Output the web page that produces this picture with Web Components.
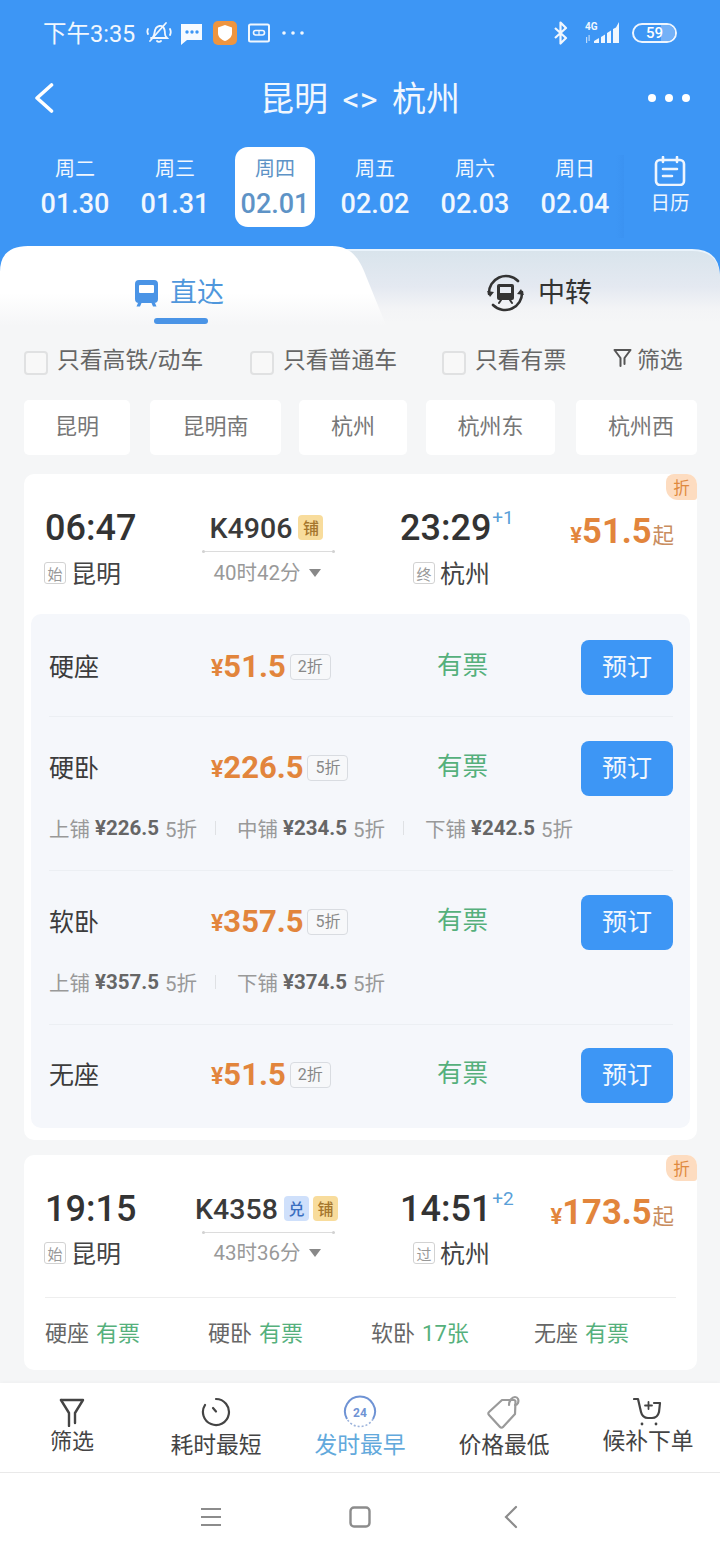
<!DOCTYPE html>
<html lang="zh-CN">
<head>
<meta charset="utf-8">
<title>昆明 &lt;&gt; 杭州</title>
<style>
  html, body { margin: 0; padding: 0; }
  body { width: 720px; height: 1560px; overflow: hidden; background: #f5f6f7; color: #333;
    font-family: Roboto, "Noto Sans CJK SC", sans-serif; }
  .list { flex: 1 1 0; min-height: 0; }
</style>
</head>
<body>
<ticket-app>
  <status-bar></status-bar>
  <top-nav title-text="昆明 <> 杭州"></top-nav>
  <date-strip>
    <date-item week="周二" day="01.30"></date-item>
    <date-item week="周三" day="01.31"></date-item>
    <date-item week="周四" day="02.01" selected></date-item>
    <date-item week="周五" day="02.02"></date-item>
    <date-item week="周六" day="02.03"></date-item>
    <date-item week="周日" day="02.04"></date-item>
  </date-strip>
  <trip-tabs></trip-tabs>
  <filter-row></filter-row>
  <station-chips></station-chips>

  <train-card dep="06:47" dep-tag="始" from="昆明" code="K4906" badges="铺" duration="40时42分"
    arr="23:29" plus="+1" arr-tag="终" to="杭州" price="51.5">
    <seat-panel>
      <seat-row name="硬座" price="51.5" off="2折"></seat-row>
      <seat-row name="硬卧" price="226.5" off="5折">
        <fare-item label="上铺" price="226.5" off="5折"></fare-item>
        <fare-item label="中铺" price="234.5" off="5折"></fare-item>
        <fare-item label="下铺" price="242.5" off="5折"></fare-item>
      </seat-row>
      <seat-row name="软卧" price="357.5" off="5折">
        <fare-item label="上铺" price="357.5" off="5折"></fare-item>
        <fare-item label="下铺" price="374.5" off="5折"></fare-item>
      </seat-row>
      <seat-row name="无座" price="51.5" off="2折"></seat-row>
    </seat-panel>
  </train-card>

  <train-card compact dep="19:15" dep-tag="始" from="昆明" code="K4358" badges="兑,铺" duration="43时36分"
    arr="14:51" plus="+2" arr-tag="过" to="杭州" price="173.5">
    <seat-summary>
      <summary-item name="硬座" state="有票"></summary-item>
      <summary-item name="硬卧" state="有票"></summary-item>
      <summary-item name="软卧" state="17张"></summary-item>
      <summary-item name="无座" state="有票"></summary-item>
    </seat-summary>
  </train-card>

  <div class="list"></div>

  <sort-bar>
    <sort-item icon="filter" label="筛选" high></sort-item>
    <sort-item icon="clock" label="耗时最短"></sort-item>
    <sort-item icon="early" label="发时最早" active></sort-item>
    <sort-item icon="tag" label="价格最低"></sort-item>
    <sort-item icon="cart" label="候补下单" high></sort-item>
  </sort-bar>
  <system-nav></system-nav>
</ticket-app>

<script>
  const BLUE = '#3d96f5';

  // Small base class, every element just fills its open shadow root once
  class ShadowElement extends HTMLElement {
    constructor() {
      super();
      this.attachShadow({ mode: 'open' });
    }
    connectedCallback() {
      this.shadowRoot.innerHTML = this.render();
    }
    attr(name) {
      return this.getAttribute(name) || '';
    }
  }

  class TicketApp extends ShadowElement {
    render() {
      return `
      <style>
        :host { display: flex; flex-direction: column; height: 1560px; }
        ::slotted(:not(.list)) { flex: none; }
      </style>
      <slot></slot>`;
    }
  }

  class StatusBar extends ShadowElement {
    render() {
      return `
      <style>
        :host { display: flex; align-items: center; height: 66px; background: ${BLUE}; color: #f1f7fe; box-sizing: border-box; padding: 0 43px 0 43px; }
        .time { font-size: 23.500px; width: 101px; white-space: nowrap; padding-bottom: 3px; }
        svg { display: block; flex: none; }
        .gap { flex: 1; }
      </style>
      <span class="time">下午3:35</span>
      <svg width="26" height="26" viewBox="0 0 26 26" fill="none" stroke="#f1f7fe" stroke-width="1.8" stroke-linecap="round" style="margin-left:2px">
        <path d="M7 17c2-2 1-6 3-9 2-2 5-3 7-1 2 2 2 5 2 7 0 2 1 3 2 4H5"/><path d="M11 21c1 1 3 1 4 0"/><path d="M20 3 4 21"/><path d="M24 9c1 2 1 4 0 6M2 9c-1 2-1 3 0 5"/>
      </svg>
      <svg width="24" height="24" viewBox="0 0 24 24" style="margin-left:7px">
        <path fill="#f6faff" d="M2 3h21v16H8l-6 5z"/><circle cx="8" cy="11" r="1.7" fill="${BLUE}"/><circle cx="13" cy="11" r="1.7" fill="${BLUE}"/><circle cx="18" cy="11" r="1.7" fill="${BLUE}"/>
      </svg>
      <svg width="24" height="24" viewBox="0 0 24 24" style="margin-left:10px">
        <rect width="24" height="24" rx="5" fill="#ee9540"/><path fill="#fff" d="M12 4l7 2.5V12c0 4-3 6.500-7 8-4-1.500-7-4-7-8V6.500z"/>
      </svg>
      <svg width="22" height="20" viewBox="0 0 22 20" fill="none" stroke="#f1f7fe" style="margin-left:11px">
        <rect x="1" y="1.500" width="20" height="17" rx="1.500" stroke-width="2"/><rect x="5.500" y="7.500" width="11" height="4.500" rx="2.200" stroke-width="1.600"/><path d="M11 7.500v4.500" stroke-width="1.200"/>
      </svg>
      <svg width="22" height="6" viewBox="0 0 22 6" fill="#f1f7fe" style="margin-left:12px">
        <circle cx="2" cy="3" r="1.800"/><circle cx="11" cy="3" r="1.800"/><circle cx="20" cy="3" r="1.800"/>
      </svg>
      <span class="gap"></span>
      <svg width="14" height="24" viewBox="0 0 14 24" fill="none" stroke="#f1f7fe" stroke-width="2.200" stroke-linejoin="round">
        <path d="M1 7l11 10-5.500 5.500V1.500L12 7 1 17"/>
      </svg>
      <signal-icon style="margin-left:17px"></signal-icon>
      <battery-pill level="59" style="margin-left:11px"></battery-pill>`;
    }
  }

  class SignalIcon extends ShadowElement {
    render() {
      return `
      <style>
        :host { display: block; position: relative; width: 36px; height: 24px; }
        svg { display: block; }
        span { position: absolute; left: 0; top: 0; font-size: 10px; line-height: 11px; font-weight: 700; color: #f1f7fe; }
      </style>
      <span>4G</span>
      <svg width="36" height="24" viewBox="0 0 36 24" fill="#f1f7fe">
        <rect x="1" y="16" width="1.200" height="6" opacity=".7"/><rect x="3.500" y="14" width="1.200" height="6" opacity=".7"/>
        <path d="M9 22v-2l5-3v5zM16 22v-6l4-2.500V22zM22 22V12l4-2.500V22zM28 22V8l3-1.500L34 1v21z"/>
      </svg>`;
    }
  }

  class BatteryPill extends ShadowElement {
    render() {
      return `
      <style>
        :host { display: flex; align-items: center; justify-content: center; box-sizing: border-box; width: 45px; height: 20px; border: 2px solid #eef5fe; border-radius: 10px; position: relative; overflow: hidden; }
        i { position: absolute; right: 0; top: 0; bottom: 0; width: 35%; background: #74b1f7; }
        span { position: relative; font-size: 15px; line-height: 16px; font-weight: 500; color: #fff; }
      </style>
      <i></i><span>${this.attr('level')}</span>`;
    }
  }

  class TopNav extends ShadowElement {
    render() {
      const title = this.attr('title-text').replace('<', '&lt;').replace('>', '&gt;');
      return `
      <style>
        :host { display: grid; grid-template-columns: 1fr auto 1fr; align-items: center; height: 64px; background: ${BLUE}; color: #f1f7fe; box-sizing: border-box; padding: 0 34px; }
        h1 { margin: 0; padding-top: 2px; font-size: 34px; font-weight: 400; line-height: 62px; word-spacing: 6px; white-space: nowrap; }
        svg { display: block; }
        .more { justify-self: end; margin-right: -4px; }
      </style>
      <svg width="20" height="32" viewBox="0 0 20 32" fill="none" stroke="#fff" stroke-width="3.600" stroke-linecap="round" stroke-linejoin="round">
        <path d="M17.500 3 3 16l14.500 13"/>
      </svg>
      <h1>${title}</h1>
      <svg class="more" width="42" height="10" viewBox="0 0 42 10" fill="#fff">
        <circle cx="4" cy="5" r="4"/><circle cx="21" cy="5" r="4"/><circle cx="38" cy="5" r="4"/>
      </svg>`;
    }
  }

  class DateStrip extends ShadowElement {
    render() {
      return `
      <style>
        :host { display: flex; height: 116px; background: ${BLUE}; box-sizing: border-box; padding: 17px 0 0 25px; }
        .days { display: grid; grid-template-columns: repeat(6, 100px); width: 600px; height: 80px; }
        .cal { position: relative; display: flex; flex-direction: column; align-items: center; width: 92px; margin-left: -1px; color: #eef5fe; font-size: 19.500px; line-height: 24px; }
        .cal::before { content: ""; position: absolute; left: -8px; top: 8px; bottom: 8px; width: 8px; background: linear-gradient(90deg, rgba(50,130,225,0), rgba(50,130,225,.18)); }
        svg { display: block; margin: 9px 0 6px; }
      </style>
      <div class="days"><slot></slot></div>
      <div class="cal">
        <svg width="32" height="30" viewBox="0 0 32 30" fill="none" stroke="#eef5fe" stroke-width="2.600" stroke-linecap="round">
          <rect x="2" y="4" width="28" height="25" rx="4"/><path d="M9 1v5M23 1v5M9 13h14M9 20h9"/>
        </svg>
        <span>日历</span>
      </div>`;
    }
  }

  class DateItem extends ShadowElement {
    render() {
      return `
      <style>
        :host { display: flex; flex-direction: column; align-items: center; box-sizing: border-box; width: 80px; margin-left: 10px; height: 80px; border-radius: 13px; color: #f1f7fe; white-space: nowrap; }
        :host([selected]) { background: #fff; color: #5e93c6; }
        .w { font-size: 20px; line-height: 28px; margin-top: 8px; }
        .d { font-size: 27px; line-height: 36px; font-weight: 500; margin-top: 3px; }
      </style>
      <span class="w">${this.attr('week')}</span>
      <span class="d">${this.attr('day')}</span>`;
    }
  }

  class TripTabs extends ShadowElement {
    render() {
      return `
      <style>
        :host { display: block; position: relative; height: 94px; color: #333; }
        .bg { position: absolute; left: 0; top: 0; display: block; }
        .tab { position: absolute; top: 0; height: 94px; display: flex; align-items: center; box-sizing: border-box; }
        .tab span { font-size: 27px; line-height: 92px; white-space: nowrap; }
        .direct { left: 134px; color: #4f97dc; gap: 11px; }
        .direct svg { margin-top: -1px; }
        .transfer { left: 487px; gap: 14px; color: #333; }
        .bar { position: absolute; left: 154px; top: 72px; width: 54px; height: 6px; border-radius: 3px; background: #4a94e6; }
        svg { display: block; }
      </style>
      <svg class="bg" width="720" height="94" viewBox="0 0 720 94">
        <defs>
          <linearGradient id="r" x1="0" y1="0" x2="0" y2="1"><stop offset="0" stop-color="#d9e4ec"/><stop offset=".4" stop-color="#e4e9f1"/><stop offset=".65" stop-color="#f3f4f6"/><stop offset=".8" stop-color="#f5f6f7"/></linearGradient>
          <linearGradient id="l" x1="0" y1="0" x2="0" y2="1"><stop offset="0" stop-color="#fff"/><stop offset=".5" stop-color="#fff"/><stop offset=".85" stop-color="#f5f6f7"/></linearGradient>
        </defs>
        <rect width="720" height="94" fill="${BLUE}"/>
        <path fill="#f5f6f7" d="M0 40h720v54H0z"/>
        <path fill="#eaf3fb" d="M330 3h362q28 0 28 28v4H330z"/>
        <path fill="url(#r)" d="M330 5h362q28 0 28 28v61H330z"/>
        <path fill="url(#l)" d="M0 94V26Q0 0 28 0h304c20 0 28 14 34 30l26 64z"/>
      </svg>
      <div class="tab direct">
        <svg width="25" height="28" viewBox="0 0 25 28" fill="#4a94e6">
          <path fill-rule="evenodd" d="M5 1h15a4 4 0 0 1 4 4v15a4 4 0 0 1-4 4H5a4 4 0 0 1-4-4V5a4 4 0 0 1 4-4zm1 5a1 1 0 0 0-1 1v6a1 1 0 0 0 1 1h13a1 1 0 0 0 1-1V7a1 1 0 0 0-1-1z"/>
          <path d="M4 24h3.500L6 27.500H2.500zM17.500 24H21l1.500 3.500H19z"/>
        </svg>
        <span>直达</span>
      </div>
      <div class="bar"></div>
      <div class="tab transfer">
        <svg width="37" height="38" viewBox="0 0 37 38" fill="none" stroke="#333" stroke-width="2.600" stroke-linecap="round">
          <path d="M2 20A17 17 0 0 1 31 7"/><path d="M35 18A17 17 0 0 1 6 31"/>
          <path fill="#333" stroke="none" d="M0 17l3 6 4-5zM37 21l-3-6-4 5z"/>
          <path fill="#333" stroke="none" fill-rule="evenodd" d="M12 10h13a2 2 0 0 1 2 2v12a2 2 0 0 1-2 2H12a2 2 0 0 1-2-2V12a2 2 0 0 1 2-2zm1 3v6h11v-6z"/>
          <path d="M12 29l2-3M25 29l-2-3" stroke-width="2"/>
        </svg>
        <span>中转</span>
      </div>`;
    }
  }

  class FilterRow extends ShadowElement {
    render() {
      return `
      <style>
        :host { display: grid; grid-template-columns: 226px 192px 171px auto; align-items: center; height: 60px; box-sizing: border-box; padding: 0 0 14px 24px; background: #f5f6f7; color: #666; font-size: 22.800px; }
        label { display: flex; align-items: center; white-space: nowrap; }
        label span { padding-bottom: 10px; }
        i { flex: none; display: block; width: 24px; height: 24px; box-sizing: border-box; margin: 0 9px 0 0; background: #f8f8f8; border: 2px solid #e0e1e2; border-radius: 4px; }
        .more { display: flex; align-items: center; gap: 5px; padding-bottom: 10px; }
        svg { display: block; }
      </style>
      <label><i></i><span>只看高铁/动车</span></label>
      <label><i></i><span>只看普通车</span></label>
      <label><i></i><span>只看有票</span></label>
      <span class="more">
        <svg width="19" height="20" viewBox="0 0 19 20" fill="none" stroke="#555" stroke-width="2" stroke-linejoin="round" stroke-linecap="round">
          <path d="M1.500 2h16l-6 8v6M7.500 18v-8l-6-8"/>
        </svg>筛选
      </span>`;
    }
  }

  class StationChips extends ShadowElement {
    render() {
      const chips = [['昆明', 106, 20], ['昆明南', 131, 18], ['杭州', 108, 19], ['杭州东', 129, 21], ['杭州西', 121, 0]];
      return `
      <style>
        :host { display: flex; box-sizing: border-box; height: 74px; padding: 0 0 19px 24px; background: #f5f6f7; }
        span { display: flex; flex: none; align-items: center; justify-content: center; box-sizing: border-box; height: 55px; padding-bottom: 8px; background: #fff; border-radius: 5px; color: #777; font-size: 22px; }
        span:last-child { padding-left: 9px; }
      </style>
      ${chips.map(([c, w, gap]) => `<span style="width:${w}px;margin-right:${gap}px">${c}</span>`).join('')}`;
    }
  }

  class TrainCard extends ShadowElement {
    render() {
      const badges = this.attr('badges').split(',').map((b) =>
        `<b class="${b === '兑' ? 'blue' : 'gold'}">${b}</b>`).join('');
      return `
      <style>
        :host { display: block; position: relative; margin: 0 23px 15px 24px; background: #fff; border-radius: 10px; }
        :host([compact]) { margin-bottom: 0; }
        .corner { position: absolute; right: 0; top: 0; width: 31px; height: 26px; display: flex; align-items: center; justify-content: center; background: #fddcc0; color: #e08a3f; font-size: 16.500px; border-radius: 8px 10px 3px 12px; }
        .head { display: grid; grid-template-columns: 157px 133px 1fr auto; height: 140px; box-sizing: border-box; padding: 32px 23px 0 21px; }
        :host([compact]) .head { height: 142px; }
        .time { font-size: 36px; line-height: 44px; font-weight: 500; color: #333; white-space: nowrap; }
        .station { display: flex; align-items: center; margin-top: 4px; height: 36px; font-size: 25px; color: #444; white-space: nowrap; }
        :host([compact]) .station { margin-top: 3px; }
        .station i { font-style: normal; display: flex; align-items: center; justify-content: center; box-sizing: border-box; width: 22px; height: 22px; margin: 2px 5px 0 -1px; border: 1px solid #d2d2d2; border-radius: 3px; font-size: 15px; color: #999; }
        .mid { display: flex; flex-direction: column; align-items: center; }
        .code { display: flex; align-items: center; justify-content: center; height: 45px; gap: 6px; padding-right: 4px; font-size: 28.500px; font-weight: 500; white-space: nowrap; color: #3a3a3a; }
        .code b { display: flex; align-items: center; justify-content: center; width: 25px; height: 25px; margin-top: -3px; border-radius: 4px; font-size: 16px; font-weight: 500; }
        .code .gold { background: #f8dc9c; color: #a5762d; }
        .code .blue { background: #cfe0fb; color: #3b6fc0; margin-right: -2px; }
        .line { position: relative; width: 133px; height: 1px; background: #dcdcdc; }
        .line::before, .line::after { content: ""; position: absolute; top: -1px; width: 3px; height: 3px; border-radius: 50%; background: #d2d2d2; }
        .line::before { left: 0; } .line::after { right: 0; }
        .dur { display: flex; align-items: center; gap: 8px; margin-top: 7px; padding-right: 3px; font-size: 20.500px; line-height: 28px; color: #999; white-space: nowrap; }
        :host([compact]) .dur { margin-top: 6px; }
        .dur u { display: block; width: 0; height: 0; border: 6px solid transparent; border-top: 8px solid #888; border-bottom: 0; }
        .arr { padding-left: 65px; }
        .arr .time { display: flex; align-items: flex-start; }
        .arr sup { font-size: 19px; line-height: 22px; font-weight: 400; color: #5a9fd8; margin: 1px 0 0 1px; }
        .arr .station { padding-left: 14px; }
        .price { color: #e2853c; font-weight: 700; font-size: 34.500px; line-height: 50px; white-space: nowrap; }
        .price small { font-size: 22px; }
        .price em { font-style: normal; font-size: 21.500px; font-weight: 400; color: #c98d5f; margin-left: 1px; }
      </style>
      <span class="corner">折</span>
      <div class="head">
        <div>
          <div class="time">${this.attr('dep')}</div>
          <div class="station"><i>${this.attr('dep-tag')}</i>${this.attr('from')}</div>
        </div>
        <div class="mid">
          <div class="code"><span>${this.attr('code')}</span>${badges}</div>
          <div class="line"></div>
          <div class="dur">${this.attr('duration')}<u></u></div>
        </div>
        <div class="arr">
          <div class="time">${this.attr('arr')}<sup>${this.attr('plus')}</sup></div>
          <div class="station"><i>${this.attr('arr-tag')}</i>${this.attr('to')}</div>
        </div>
        <div class="price"><small>¥</small>${this.attr('price')}<em>起</em></div>
      </div>
      <slot></slot>`;
    }
  }

  class SeatPanel extends ShadowElement {
    render() {
      return `
      <style>
        :host { display: block; margin: 0 7px 12px; background: #f5f7fb; border-radius: 10px; }
      </style>
      <slot></slot>`;
    }
  }

  class SeatRow extends ShadowElement {
    render() {
      const hasFares = this.children.length > 0;
      return `
      <style>
        :host { display: block; padding: 0 17px 0 18px; }
        .box { box-sizing: border-box; padding: 24px 0 21px; border-bottom: 1px solid #eceff3; }
        .box.with-fares { padding-bottom: 29px; }
        :host(:first-child) .box { padding-top: 26px; }
        :host(:last-child) .box { border-bottom: 0; padding-top: 23px; padding-bottom: 25px; }
        .main { display: grid; grid-template-columns: 162px 226px 144px 92px; align-items: center; height: 55px; }
        .name { font-size: 25px; color: #3c3c3c; padding-bottom: 6px; }
        .price { display: flex; align-items: center; color: #e2853c; font-size: 31px; font-weight: 700; white-space: nowrap; padding-bottom: 2px; }
        .price small { font-size: 23px; margin-top: 3px; }
        .off { display: block; box-sizing: border-box; height: 26px; line-height: 23px; margin-left: 4px; padding: 0 7px; border: 1px solid #d9dce1; border-radius: 4px; color: #888; font-size: 16px; font-weight: 400; background: #f7f8fa; }
        .state { font-size: 25.500px; color: #55b07c; padding-bottom: 10px; }
        button { height: 55px; width: 92px; padding: 0 0 5px; border: 0; border-radius: 8px; background: ${BLUE}; color: #f3f8fe; font: inherit; font-size: 25px; }
        .fares { display: flex; margin-top: 18px; height: 27px; align-items: center; }
      </style>
      <div class="box ${hasFares ? 'with-fares' : ''}">
        <div class="main">
          <span class="name">${this.attr('name')}</span>
          <span class="price"><small>¥</small>${this.attr('price')}<span class="off">${this.attr('off')}</span></span>
          <span class="state">有票</span>
          <button type="button">预订</button>
        </div>
        ${hasFares ? '<div class="fares"><slot></slot></div>' : ''}
      </div>`;
    }
  }

  class FareItem extends ShadowElement {
    render() {
      return `
      <style>
        :host { display: flex; align-items: center; font-size: 20.500px; color: #999; white-space: nowrap; }
        :host(:not(:last-child))::after { content: ""; display: block; width: 1px; height: 14px; background: #dfe1e4; margin: 0 21px 0 18px; }
        b { font-weight: 700; color: #666; margin: 0 6px 0 5px; font-size: 20.500px; }
      </style>
      ${this.attr('label')}<b>¥${this.attr('price')}</b>${this.attr('off')}`;
    }
  }

  class SeatSummary extends ShadowElement {
    render() {
      return `
      <style>
        :host { display: grid; grid-template-columns: repeat(4, 163px); margin: 0 21px; height: 73px; box-sizing: border-box; padding-bottom: 6px; border-top: 1px solid #eeeeee; align-items: center; }
      </style>
      <slot></slot>`;
    }
  }

  class SummaryItem extends ShadowElement {
    render() {
      return `
      <style>
        :host { display: block; font-size: 22px; color: #666; white-space: nowrap; }
        span { color: #55b07c; margin-left: 7px; }
      </style>
      ${this.attr('name')}<span>${this.attr('state')}</span>`;
    }
  }

  class SortBar extends ShadowElement {
    render() {
      return `
      <style>
        :host { display: grid; grid-template-columns: repeat(5, 144px); height: 90px; background: #fff; border-bottom: 1px solid #e9e9e9; box-sizing: border-box; box-shadow: 0 -2px 3px rgba(0,0,0,.02); }
      </style>
      <slot></slot>`;
    }
  }

  const SORT_ICONS = {
    filter: `<svg width="26" height="30" viewBox="0 0 26 30" fill="none" stroke="#444" stroke-width="2.400" stroke-linecap="round" stroke-linejoin="round"><path d="M2 3h22l-8 13v10"/><path d="M10 29V16L2 3"/></svg>`,
    clock: `<svg width="30" height="32" viewBox="0 0 30 32" fill="none" stroke="#444" stroke-width="2.200" stroke-linecap="round"><path d="M15 3a13 13 0 1 1-11 6"/><path d="M12 12l3 3.500"/></svg>`,
    early: `<svg width="34" height="34" viewBox="0 0 34 34" fill="none"><path d="M4 24A15 15 0 1 1 30 24" stroke="#6f93d4" stroke-width="2"/><path d="M30 24A15 15 0 0 1 4 24" stroke="#9db4dc" stroke-width="1.600" stroke-dasharray="2 2"/><text x="17" y="21.500" text-anchor="middle" font-family="Roboto" font-size="12" font-weight="700" fill="#6f93d4">24</text></svg>`,
    tag: `<svg width="36" height="36" viewBox="0 0 36 36" fill="none" stroke="#9a9a9a" stroke-width="2.200" stroke-linejoin="round" stroke-linecap="round"><path d="M16 6h12a1.500 1.500 0 0 1 1.500 1.500L29 20 17 33a2 2 0 0 1-3 0L3 21a2 2 0 0 1 0-3z"/><path d="M23 11c0-4 3-8 6-8 3 0 4 3 3 6-.5 1-1.500 2-3 2"/></svg>`,
    cart: `<svg width="30" height="30" viewBox="0 0 30 30" fill="none" stroke="#444" stroke-width="2.200" stroke-linecap="round" stroke-linejoin="round"><path d="M1 2h4l3 13c1 4 3 6 7 6h4c4 0 6-2 7-6l1-9h-6"/><path d="M15.500 5v7M12 8.500h7" stroke-width="1.800"/><circle cx="9" cy="27" r="1.400" fill="#444" stroke="none"/><circle cx="23" cy="27" r="1.400" fill="#444" stroke="none"/></svg>`
  };

  class SortItem extends ShadowElement {
    render() {
      return `
      <style>
        :host { display: flex; flex-direction: column; align-items: center; padding-top: 12px; box-sizing: border-box; color: #444; }
        :host([active]) { color: #62a9dc; }
        .icon { display: flex; align-items: center; justify-content: center; height: 34px; }
        svg { display: block; }
        .label { margin-top: 4px; line-height: 26px; font-size: 22.800px; white-space: nowrap; }
        :host([high]) .label { margin-top: 0; font-size: 22px; }
        :host([icon="cart"]) .label { font-size: 22.800px; }
      </style>
      <span class="icon">${SORT_ICONS[this.attr('icon')]}</span>
      <span class="label">${this.attr('label')}</span>`;
    }
  }

  class SystemNav extends ShadowElement {
    render() {
      return `
      <style>
        :host { display: grid; grid-template-columns: 22px 22px 22px; justify-content: center; column-gap: 127px; align-items: center; height: 87px; background: #fff; }
        svg { display: block; margin: 0 auto; }
        svg:last-child { margin-left: 6px; }
      </style>
      <svg width="22" height="20" viewBox="0 0 22 20" fill="none" stroke="#8c8c8c" stroke-width="2"><path d="M1 2h20M1 10h20M1 18h20"/></svg>
      <svg width="22" height="22" viewBox="0 0 22 22" fill="none" stroke="#8c8c8c" stroke-width="2.400"><rect x="1.500" y="1.500" width="19" height="19" rx="3.500"/></svg>
      <svg width="14" height="24" viewBox="0 0 14 24" fill="none" stroke="#8c8c8c" stroke-width="2.200" stroke-linecap="round"><path d="M12 2 2 12l10 10"/></svg>`;
    }
  }

  customElements.define('ticket-app', TicketApp);
  customElements.define('status-bar', StatusBar);
  customElements.define('signal-icon', SignalIcon);
  customElements.define('battery-pill', BatteryPill);
  customElements.define('top-nav', TopNav);
  customElements.define('date-strip', DateStrip);
  customElements.define('date-item', DateItem);
  customElements.define('trip-tabs', TripTabs);
  customElements.define('filter-row', FilterRow);
  customElements.define('station-chips', StationChips);
  customElements.define('train-card', TrainCard);
  customElements.define('seat-panel', SeatPanel);
  customElements.define('seat-row', SeatRow);
  customElements.define('fare-item', FareItem);
  customElements.define('seat-summary', SeatSummary);
  customElements.define('summary-item', SummaryItem);
  customElements.define('sort-bar', SortBar);
  customElements.define('sort-item', SortItem);
  customElements.define('system-nav', SystemNav);
</script>
</body>
</html>
